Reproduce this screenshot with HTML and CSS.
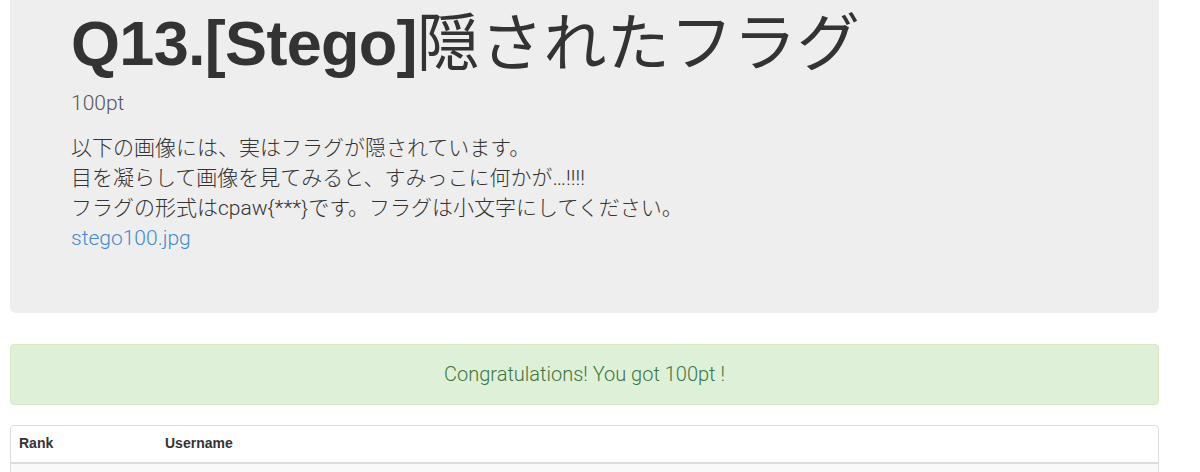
FILE: index.html
```html
<!DOCTYPE html>
<html>
<head>
  <meta charset="UTF-8">
  <title>Q13.[Stego]隠されたフラグ</title>
  <link rel="stylesheet" href="styles.css">
</head>
<body>
  <div id="container">
    <div class="jumbotron">
      <h1>Q13.[Stego]<span class="jpTitle">隠されたフラグ</span></h1>
      <p class="points">100pt</p>
      <p class="question">
        以下の画像には、実はフラグが隠されています。<br>
        目を凝らして画像を見てみると、すみっこに何かが…!!!!<br>
        フラグの形式はcpaw{***}です。フラグは小文字にしてください。<br>
        <a href="#">stego100.jpg</a>
      </p>
    </div>

    <div class="alertSuccess">Congratulations! You got 100pt !</div>

    <div class="rankPanel">
      <table class="rankTable">
        <thead>
          <tr>
            <th class="rankCol">Rank</th>
            <th>Username</th>
          </tr>
        </thead>
        <tbody>
          <tr class="odd"><td>&nbsp;</td><td>&nbsp;</td></tr>
        </tbody>
      </table>
    </div>
  </div>
</body>
</html>
```

FILE: styles.css
```css
body {
  margin: 0;
  padding: 0;
  background: #ffffff;
  color: #333333;
  font-family: "Liberation Sans", "Noto Sans CJK JP", sans-serif;
  font-size: 14px;
  line-height: 1.42857;
}
#container {
  width: 1149px;
  margin-left: 10px;
}
.jumbotron {
  background-color: #eeeeee;
  border-radius: 0 0 6px 6px;
  padding: 9px 60px 45px 61px;
  margin-bottom: 31px;
}
h1 {
  font-size: 63px;
  font-weight: bold;
  line-height: 1.1;
  letter-spacing: -0.7px;
  margin: 0 0 10px 0;
  color: #333333;
}
h1 .jpTitle {
  font-weight: normal;
  letter-spacing: 0.3px;
}
.jumbotron p {
  font-family: "Roboto", "Noto Sans CJK JP", sans-serif;
  font-size: 21px;
  font-weight: 300;
  line-height: 30px;
  margin: 0 0 15px 0;
}
.jumbotron .points {
  color: #555555;
}
.jumbotron a {
  color: #428bca;
  text-decoration: none;
}
.alertSuccess {
  background-color: #dff0d8;
  border: 1px solid #d6e9c6;
  border-radius: 4px;
  color: #3c763d;
  font-family: "Roboto", sans-serif;
  font-weight: 300;
  font-size: 20px;
  line-height: 29px;
  padding: 15px;
  text-align: center;
  margin-bottom: 20px;
}
.rankPanel {
  border: 1px solid #dddddd;
  border-radius: 4px;
  overflow: hidden;
}
.rankTable {
  width: 100%;
  border-collapse: collapse;
}
.rankTable th {
  text-align: left;
  font-weight: bold;
  padding: 8px;
  border-bottom: 2px solid #dddddd;
}
.rankTable td {
  padding: 8px;
}
.rankTable .rankCol {
  width: 130px;
}
.rankTable tr.odd {
  background-color: #f9f9f9;
}
```
